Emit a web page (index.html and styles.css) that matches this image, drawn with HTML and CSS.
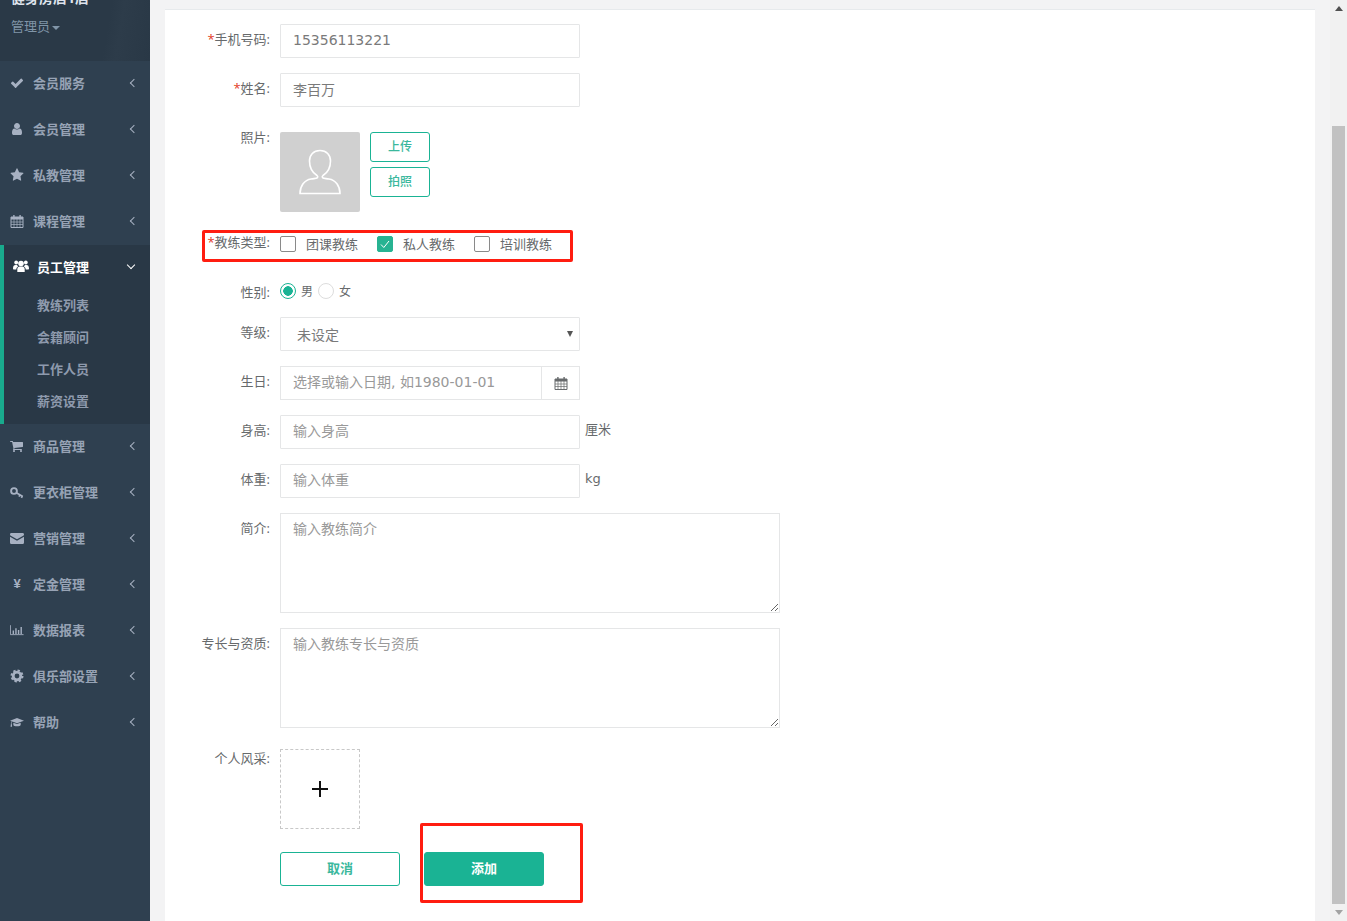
FILE: index.html
```html
<!DOCTYPE html>
<html lang="en">
<head>
  <meta charset="UTF-8">
  <title>添加教练</title>
  <link rel="stylesheet" href="styles.css">
</head>
<body>
  <svg class="defs" width="0" height="0">
    <symbol id="i-check" viewBox="0 0 1792 1792"><path d="M1671 566q0 40-28 68l-724 724-136 136q-28 28-68 28t-68-28l-136-136-362-362q-28-28-28-68t28-68l136-136q28-28 68-28t68 28l294 295 656-657q28-28 68-28t68 28l136 136q28 28 28 68z"/></symbol>
    <symbol id="i-user" viewBox="0 0 1792 1792"><path d="M1536 1399q0 109-62.5 187t-150.5 78h-854q-88 0-150.5-78t-62.5-187q0-85 8.5-160.5t31.5-152 58.5-131 94-89 134.5-34.5q131 128 313 128t313-128q76 0 134.5 34.5t94 89 58.5 131 31.5 152 8.5 160.5zm-256-887q0 159-112.5 271.5t-271.5 112.5-271.5-112.5-112.5-271.5 112.5-271.5 271.5-112.5 271.5 112.5 112.5 271.5z"/></symbol>
    <symbol id="i-star" viewBox="0 0 1792 1792"><path d="M1728 647q0 22-26 48l-363 354 86 500q1 7 1 20 0 21-10.5 35.5t-30.5 14.5q-19 0-40-12l-449-236-449 236q-22 12-40 12-21 0-31.5-14.5t-10.5-35.5q0-6 2-20l86-500-364-354q-25-27-25-48 0-37 56-46l502-73 225-455q19-41 49-41t49 41l225 455 502 73q56 9 56 46z"/></symbol>
    <symbol id="i-cal" viewBox="0 0 14 14"><path d="M1 3h12v10.500H1z" fill="none" stroke="currentColor"/><path d="M1 3h12v2.500H1zM3.200 1h1.400v3H3.200zM9.400 1h1.400v3H9.400z"/><path d="M1 8h12M1 10.500h12M4 5v8M7 5v8M10 5v8" stroke="currentColor" stroke-width=".7" fill="none"/></symbol>
    <symbol id="i-users" viewBox="0 0 16 14"><circle cx="8" cy="4.500" r="2.800"/><circle cx="3.200" cy="3.500" r="1.900"/><circle cx="12.800" cy="3.500" r="1.900"/><path d="M4.300 13v-2.500C4.300 8.500 5.500 7.600 6.500 7.600h3c1 0 2.200.9 2.200 2.900V13z"/><path d="M0 9.500C0 7 1 6 2.500 6h1.700c.3 1 .8 1.300 1 1.500-1.300.5-1.900 1.500-1.900 3H1C.4 10.500 0 10.100 0 9.500zM16 9.500C16 7 15 6 13.500 6h-1.700c-.3 1-.8 1.300-1 1.500 1.300.5 1.900 1.500 1.900 3H15c.6 0 1-.4 1-1z"/></symbol>
    <symbol id="i-cart" viewBox="0 0 1792 1792"><path d="M640 1536q0 52-38 90t-90 38-90-38-38-90 38-90 90-38 90 38 38 90zm896 0q0 52-38 90t-90 38-90-38-38-90 38-90 90-38 90 38 38 90zm128-1088v512q0 24-16.500 42.500t-40.500 21.500l-1044 122q13 60 13 70 0 16-24 64h920q26 0 45 19t19 45-19 45-45 19h-1024q-26 0-45-19t-19-45q0-11 8-31.500t16-36 21.500-40 15.500-29.500l-177-823h-204q-26 0-45-19t-19-45 19-45 45-19h256q16 0 28.500 6.500t19.500 15.500 13 24.500 8 26 5.500 29.500 4.500 26h1201q26 0 45 19t19 45z"/></symbol>
    <symbol id="i-key" viewBox="0 0 14 14"><circle cx="4" cy="6" r="2.900" fill="none" stroke="currentColor" stroke-width="1.900"/><path d="M6.300 7.700l6.500 3.800M10 9.900l-1 1.700M12.300 11.200l-.9 1.600" fill="none" stroke="currentColor" stroke-width="1.700"/></symbol>
    <symbol id="i-mail" viewBox="0 0 14 14"><path d="M0 3.500C0 2.700.5 2 1.300 2h11.400c.8 0 1.300.7 1.300 1.500 0 .5-.3 1-.8 1.300L7 8.300.8 4.800C.3 4.500 0 4 0 3.500z"/><path d="M0 5.700l7 4 7-4v5.800c0 .8-.5 1.500-1.300 1.500H1.300C.5 13 0 12.300 0 11.500z"/></symbol>
    <symbol id="i-chart" viewBox="0 0 16 14"><path d="M.5 1.500v10.800H15.500" fill="none" stroke="currentColor"/><path d="M3 7.500h1.600v4H3zM6 5h1.600v6.500H6zM9 7h1.600v4.500H9zM12 3.500h1.600v8H12z"/></symbol>
    <symbol id="i-gear" viewBox="0 0 14 14"><circle cx="7" cy="7" r="3.800" fill="none" stroke="currentColor" stroke-width="2.800"/><circle cx="7" cy="7" r="5.500" fill="none" stroke="currentColor" stroke-width="2" stroke-dasharray="2.300 2"/></symbol>
    <symbol id="i-cap" viewBox="0 0 16 14"><path d="M8 2.500L16 5.500 8 8.500 2.700 6.500C2 7.200 1.800 8 1.800 8.800c.3.300.4.600.3 1l.3 2.700H.6l.4-2.800c-.2-.4-.1-.8.2-1 0-1 .2-1.900.8-2.700L0 5.500z"/><path d="M3.800 7.800L8 9.400l4.200-1.600v2.200c0 1-1.900 1.900-4.200 1.900s-4.200-.9-4.200-1.900z"/></symbol>
  </svg>

  <div class="page">
    <nav class="sidebar">
      <div class="profile">
        <div class="shop-name">健身房店1店</div>
        <div class="role">管理员<span class="caret"></span></div>
      </div>
      <ul class="menu">
        <li class="menu-item"><svg class="ico"><use href="#i-check"/></svg><span class="menu-text">会员服务</span><span class="chev"></span></li>
        <li class="menu-item"><svg class="ico"><use href="#i-user"/></svg><span class="menu-text">会员管理</span><span class="chev"></span></li>
        <li class="menu-item"><svg class="ico"><use href="#i-star"/></svg><span class="menu-text">私教管理</span><span class="chev"></span></li>
        <li class="menu-item"><svg class="ico"><use href="#i-cal"/></svg><span class="menu-text">课程管理</span><span class="chev"></span></li>
        <li class="menu-group">
          <div class="menu-item active"><svg class="ico"><use href="#i-users"/></svg><span class="menu-text">员工管理</span><span class="chev down"></span></div>
          <ul class="submenu">
            <li>教练列表</li>
            <li>会籍顾问</li>
            <li>工作人员</li>
            <li>薪资设置</li>
          </ul>
        </li>
        <li class="menu-item"><svg class="ico"><use href="#i-cart"/></svg><span class="menu-text">商品管理</span><span class="chev"></span></li>
        <li class="menu-item"><svg class="ico"><use href="#i-key"/></svg><span class="menu-text">更衣柜管理</span><span class="chev"></span></li>
        <li class="menu-item"><svg class="ico"><use href="#i-mail"/></svg><span class="menu-text">营销管理</span><span class="chev"></span></li>
        <li class="menu-item"><span class="ico yen">¥</span><span class="menu-text">定金管理</span><span class="chev"></span></li>
        <li class="menu-item"><svg class="ico"><use href="#i-chart"/></svg><span class="menu-text">数据报表</span><span class="chev"></span></li>
        <li class="menu-item"><svg class="ico"><use href="#i-gear"/></svg><span class="menu-text">俱乐部设置</span><span class="chev"></span></li>
        <li class="menu-item"><svg class="ico"><use href="#i-cap"/></svg><span class="menu-text">帮助</span><span class="chev"></span></li>
      </ul>
    </nav>

    <main class="content">
      <form class="panel">
        <div class="row row-15">
          <label class="label"><i>*</i>手机号码:</label>
          <input class="input" type="text" value="15356113221">
        </div>
        <div class="row row-25">
          <label class="label"><i>*</i>姓名:</label>
          <input class="input" type="text" value="李百万">
        </div>
        <div class="row row-photo">
          <label class="label">照片:</label>
          <div class="avatar">
            <svg width="44" height="46" viewBox="0 0 44 46" fill="none" stroke="#fff" stroke-width="1.600"><path d="M22 1.500c-6.500 0-10.500 4.500-10.500 10.500 0 6.500 3.500 12 7.500 14.500 1 .8 1 2 0 2.500-1 .5-3 .5-6 1C6.500 31 2 37 2 44.500h40C42 37 37.500 31 31 30c-3-.5-5-.5-6-1-1-.5-1-1.700 0-2.500 4-2.500 7.500-8 7.500-14.500C32.500 6 28.500 1.500 22 1.500z"/></svg>
          </div>
          <div class="photo-btns">
            <button class="btn-outline small" type="button">上传</button>
            <button class="btn-outline small" type="button">拍照</button>
          </div>
        </div>
        <div class="row row-type">
          <label class="label"><i>*</i>教练类型:</label>
          <div class="checks">
            <span class="check"><span class="box"></span>团课教练</span>
            <span class="check"><span class="box on"><svg width="10" height="9" viewBox="0 0 10 9" fill="none" stroke="#fff"><path d="M1 4.500L3.800 7.500 9 1"/></svg></span>私人教练</span>
            <span class="check"><span class="box"></span>培训教练</span>
          </div>
        </div>
        <div class="row row-gender">
          <label class="label">性别:</label>
          <div class="radios">
            <span class="radio on"></span><span>男</span>
            <span class="radio"></span><span>女</span>
          </div>
        </div>
        <div class="row row-15">
          <label class="label">等级:</label>
          <div class="input select">未设定<span class="select-arrow"></span></div>
        </div>
        <div class="row row-15">
          <label class="label">生日:</label>
          <div class="date">
            <input class="date-input" type="text" placeholder="选择或输入日期, 如1980-01-01">
            <span class="date-btn"><svg class="cal"><use href="#i-cal"/></svg></span>
          </div>
        </div>
        <div class="row row-15">
          <label class="label">身高:</label>
          <input class="input" type="text" placeholder="输入身高">
          <span class="unit">厘米</span>
        </div>
        <div class="row row-15">
          <label class="label">体重:</label>
          <input class="input" type="text" placeholder="输入体重">
          <span class="unit">kg</span>
        </div>
        <div class="row row-15">
          <label class="label">简介:</label>
          <textarea class="area" placeholder="输入教练简介"></textarea>
        </div>
        <div class="row row-21">
          <label class="label">专长与资质:</label>
          <textarea class="area" placeholder="输入教练专长与资质"></textarea>
        </div>
        <div class="row row-23">
          <label class="label label-top">个人风采:</label>
          <div class="uploader"><span class="plus"></span></div>
        </div>
        <div class="row actions">
          <button class="btn-outline wide" type="button">取消</button>
          <button class="btn-primary wide" type="button">添加</button>
        </div>
      </form>
    </main>

    <div class="scrollbar">
      <span class="arrow-up"></span>
      <span class="thumb"></span>
      <span class="arrow-down"></span>
    </div>
  </div>

  <div class="mark mark-type"></div>
  <div class="mark mark-submit"></div>
</body>
</html>
```
FILE: styles.css
```css
* {
  margin: 0;
  padding: 0;
  box-sizing: border-box;
}

html,
body {
  height: 100%;
  overflow: hidden;
}

body {
  position: relative;
  font-family: "Open Sans", "Noto Sans CJK SC", sans-serif;
  font-size: 13px;
  color: #676a6c;
}

ul {
  list-style: none;
}

.defs {
  position: absolute;
}

.page {
  display: flex;
  height: 921px;
}

/* sidebar */
.sidebar {
  width: 150px;
  flex: none;
  background-color: #2f4050;
  color: #a7b1c2;
  overflow: hidden;
}

.profile {
  height: 61px;
  padding-left: 11px;
  overflow: hidden;
  background: linear-gradient(100deg, #2a3947 0%, #2a3947 70%, #2d3c4a 78%, #293846 100%);
}

.shop-name {
  height: 18px;
  margin-top: -11px;
  line-height: 18px;
  color: #dfe4ed;
  font-weight: 700;
  font-size: 14px;
}

.role {
  margin-top: 10px;
  line-height: 18px;
  font-size: 13px;
  color: #8095a8;
}

.caret {
  display: inline-block;
  margin-left: 2px;
  vertical-align: middle;
  border-top: 4px solid #8095a8;
  border-left: 4px solid transparent;
  border-right: 4px solid transparent;
}

.menu-item {
  display: flex;
  align-items: center;
  height: 46px;
  padding-left: 10px;
  padding-bottom: 2px;
  font-weight: 700;
  color: #97a3b5;
}

.ico {
  width: 14px;
  height: 14px;
  flex: none;
  fill: currentColor;
  color: #a7b1c2;
}

.yen {
  display: block;
  font: 700 13px/14px "Liberation Sans", sans-serif;
  text-align: center;
}

.menu-text {
  margin-left: 9px;
  margin-bottom: 2px;
  flex: 1;
  font-size: 13px;
}

.chev {
  width: 6px;
  height: 6px;
  margin-right: 13px;
  border-left: 1.5px solid #a7b1c2;
  border-bottom: 1.5px solid #a7b1c2;
  transform: rotate(45deg);
}

.chev.down {
  margin-right: 16px;
  margin-top: -3px;
  border-color: #fff;
  transform: rotate(-45deg);
}

.menu-group {
  height: 179px;
  background-color: #293846;
  border-left: 4px solid #19aa8d;
}

.menu-item.active {
  height: 44px;
  padding-left: 9px;
  color: #fff;
}

.menu-item.active .ico {
  width: 16px;
  color: #fff;
}

.menu-item.active .menu-text {
  margin-left: 8px;
  margin-bottom: 0;
}

.submenu {
  padding-top: 1px;
}

.submenu li {
  height: 32px;
  padding-left: 33px;
  line-height: 31px;
  font-weight: 700;
  color: #8e9aad;
}

/* content */
.content {
  flex: 1;
  padding: 9px 15px 0;
  background-color: #f3f3f4;
}

.panel {
  height: 100%;
  padding-top: 14px;
  background-color: #fff;
  border-top: 1px solid #e7eaec;
}

.row {
  display: flex;
  align-items: flex-start;
}

.row-15 { margin-bottom: 15px; }
.row-21 { margin-bottom: 21px; }
.row-23 { margin-bottom: 23px; }
.row-25 { margin-bottom: 25px; }
.row-photo { margin-bottom: 24px; }
.row-type { margin-bottom: 31px; height: 16px; }
.row-gender { margin-bottom: 16px; }

.label {
  width: 105px;
  margin-right: 10px;
  flex: none;
  padding-top: 6px;
  line-height: 18px;
  text-align: right;
  font-size: 13px;
  color: #676a6c;
}

.label i {
  color: #e23b26;
  font-style: normal;
}

.row-photo .label {
  padding-top: 0;
  margin-top: -4px;
}

.row-type .label {
  padding-top: 0;
  margin-top: -3px;
}

.row-gender .label,
.label-top {
  padding-top: 0;
}

.input {
  display: block;
  width: 300px;
  height: 34px;
  padding: 0 12px 2px;
  border: 1px solid #e5e6e7;
  border-radius: 1px;
  background-color: #fff;
  font-family: "DejaVu Sans", "Noto Sans CJK SC", sans-serif;
  font-size: 14px;
  color: #7a7a7a;
  outline: none;
}

::placeholder {
  color: #999;
  opacity: 1;
}

.avatar {
  display: flex;
  width: 80px;
  height: 80px;
  align-items: center;
  justify-content: center;
  background-color: #d0d0d0;
  border-radius: 2px;
}

.photo-btns {
  display: flex;
  flex-direction: column;
  gap: 5px;
  margin-left: 10px;
}

.btn-outline,
.btn-primary {
  font: inherit;
  font-weight: 700;
  border-radius: 3px;
  border: 1px solid #1ab394;
}

.btn-outline {
  background-color: #fff;
  color: #3bb89d;
}

.btn-primary {
  background-color: #1ab394;
  color: #fff;
}

.small {
  width: 60px;
  height: 30px;
  padding-bottom: 2px;
  font-size: 12px;
  font-weight: 500;
}

.wide {
  width: 120px;
  height: 34px;
  padding-bottom: 3px;
}

.checks {
  display: flex;
  gap: 19px;
}

.check {
  display: flex;
  align-items: center;
  font-size: 13px;
  line-height: 16px;
}

.box {
  display: flex;
  width: 16px;
  height: 16px;
  margin-right: 10px;
  align-items: center;
  justify-content: center;
  border: 1px solid #8a8a8a;
  border-radius: 2px;
}

.box.on {
  background-color: #27b392;
  border-color: #27b392;
}

.radios {
  display: flex;
  align-items: center;
  height: 16px;
  font-size: 12px;
}

.radios span + span {
  margin-left: 5px;
}

.radio {
  width: 16px;
  height: 16px;
  border: 1px solid #ddd;
  border-radius: 50%;
  background-color: #fff;
}

.radio.on {
  border-color: #1ab394;
  background: radial-gradient(circle, #1ab394 0, #1ab394 4.500px, #fff 5px);
}

.select {
  display: flex;
  position: relative;
  align-items: center;
  padding-left: 16px;
  padding-bottom: 0;
}

.select-arrow {
  position: absolute;
  right: 6px;
  top: 13px;
  border-top: 6px solid #555;
  border-left: 3px solid transparent;
  border-right: 3px solid transparent;
}

.date {
  display: flex;
  width: 300px;
  height: 34px;
  border: 1px solid #e5e6e7;
}

.date-input {
  flex: 1;
  min-width: 0;
  padding: 0 12px 2px;
  border: 0;
  border-right: 1px solid #e5e6e7;
  font-family: "DejaVu Sans", "Noto Sans CJK SC", sans-serif;
  font-size: 14px;
  outline: none;
}

.date-btn {
  display: flex;
  width: 37px;
  flex: none;
  align-items: center;
  justify-content: center;
}

.cal {
  width: 14px;
  height: 14px;
  fill: #676a6c;
  color: #676a6c;
}

.unit {
  margin-left: 5px;
  line-height: 30px;
  font-family: "DejaVu Sans", "Noto Sans CJK SC", sans-serif;
  font-size: 13px;
}

.area {
  display: block;
  width: 500px;
  height: 100px;
  padding: 4px 12px;
  border: 1px solid #e5e6e7;
  font: inherit;
  font-size: 14px;
  outline: none;
}

.uploader {
  display: flex;
  width: 80px;
  height: 80px;
  align-items: center;
  justify-content: center;
  border: 1px dashed #c8c8c8;
}

.plus {
  width: 16px;
  height: 16px;
  background:
    linear-gradient(#111, #111) center / 16px 2px no-repeat,
    linear-gradient(#111, #111) center / 2px 16px no-repeat;
}

.actions {
  gap: 24px;
  padding-left: 115px;
}

/* scrollbar */
.scrollbar {
  display: flex;
  width: 17px;
  flex: none;
  flex-direction: column;
  align-items: center;
  background-color: #f1f1f1;
}

.arrow-up {
  margin-top: 6px;
  margin-bottom: 115px;
  border-bottom: 5px solid #505050;
  border-left: 4px solid transparent;
  border-right: 4px solid transparent;
}

.thumb {
  width: 13px;
  height: 778px;
  background-color: #c1c1c1;
}

.arrow-down {
  margin-top: 6px;
  border-top: 5px solid #a3a3a3;
  border-left: 4px solid transparent;
  border-right: 4px solid transparent;
}

/* red annotations drawn over the form */
.mark {
  position: absolute;
  border: 3px solid #ff1d10;
  border-radius: 2px;
  pointer-events: none;
}

.mark-type {
  left: 202px;
  top: 230px;
  width: 371px;
  height: 32px;
}

.mark-submit {
  left: 420px;
  top: 823px;
  width: 163px;
  height: 80px;
}
```
